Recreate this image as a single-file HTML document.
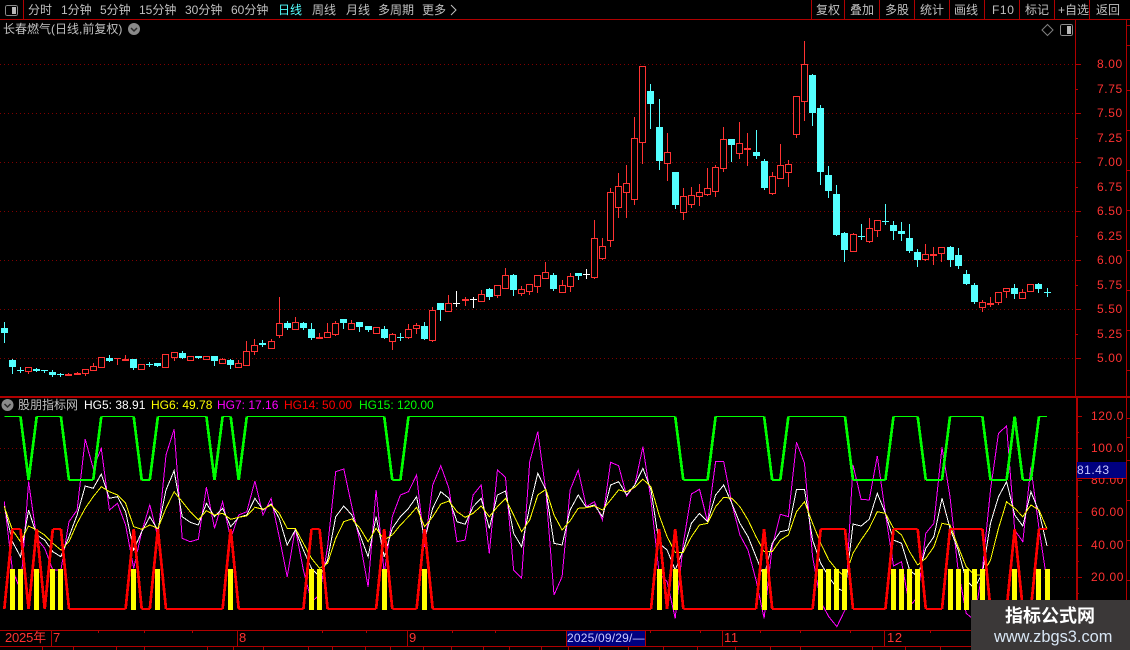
<!DOCTYPE html>
<html><head><meta charset="utf-8"><style>
html,body{margin:0;padding:0;background:#000;width:1130px;height:650px;overflow:hidden}
#r{position:relative;width:1130px;height:650px;overflow:hidden;background:#000;font:12px/14px "Liberation Sans","WenQuanYi Zen Hei","Noto Sans CJK SC",sans-serif;color:#c0c0c0}
#r span{position:absolute;white-space:nowrap}
#r svg{position:absolute;left:0;top:0}
.a{color:#ff3232;letter-spacing:.6px}
.t{color:#ff3232;font-size:13px}
</style></head><body><div id="r">
<svg id="s" width="1130" height="650" viewBox="0 0 1130 650" shape-rendering="crispEdges"></svg>

<span style="left:28px;top:3px">分时</span>
<span style="left:61px;top:3px">1分钟</span>
<span style="left:100px;top:3px">5分钟</span>
<span style="left:139px;top:3px">15分钟</span>
<span style="left:185px;top:3px">30分钟</span>
<span style="left:231px;top:3px">60分钟</span>
<span style="left:278px;top:3px;color:#54ffff">日线</span>
<span style="left:312px;top:3px">周线</span>
<span style="left:346px;top:3px">月线</span>
<span style="left:378px;top:3px">多周期</span>
<span style="left:422px;top:3px">更多</span>
<span style="left:816px;top:3px">复权</span>
<span style="left:850px;top:3px">叠加</span>
<span style="left:885px;top:3px">多股</span>
<span style="left:920px;top:3px">统计</span>
<span style="left:954px;top:3px">画线</span>
<span style="left:992px;top:3px;letter-spacing:.6px">F10</span>
<span style="left:1025px;top:3px">标记</span>
<span style="left:1058px;top:3px">+自选</span>
<span style="left:1096px;top:3px">返回</span>
<span style="left:3px;top:22px">长春燃气(日线,前复权)</span>

<span class="a" style="left:1097px;top:57px">8.00</span>
<span class="a" style="left:1097px;top:82px">7.75</span>
<span class="a" style="left:1097px;top:106px">7.50</span>
<span class="a" style="left:1097px;top:131px">7.25</span>
<span class="a" style="left:1097px;top:155px">7.00</span>
<span class="a" style="left:1097px;top:180px">6.75</span>
<span class="a" style="left:1097px;top:204px">6.50</span>
<span class="a" style="left:1097px;top:229px">6.25</span>
<span class="a" style="left:1097px;top:253px">6.00</span>
<span class="a" style="left:1097px;top:278px">5.75</span>
<span class="a" style="left:1097px;top:302px">5.50</span>
<span class="a" style="left:1097px;top:327px">5.25</span>
<span class="a" style="left:1097px;top:351px">5.00</span>

<span style="left:18px;top:398px">股朋指标网</span>
<span style="left:84px;top:398px;color:#fff">HG5: 38.91</span>
<span style="left:151px;top:398px;color:#ff0">HG6: 49.78</span>
<span style="left:217px;top:398px;color:#f0f">HG7: 17.16</span>
<span style="left:284px;top:398px;color:#f00">HG14: 50.00</span>
<span style="left:359px;top:398px;color:#0f0">HG15: 120.00</span>

<span class="a" style="left:1091px;top:409px">120.0</span>
<span class="a" style="left:1091px;top:441px">100.0</span>
<span class="a" style="left:1091px;top:473px">80.00</span>
<span class="a" style="left:1091px;top:505px">60.00</span>
<span class="a" style="left:1091px;top:538px">40.00</span>
<span class="a" style="left:1091px;top:570px">20.00</span>
<span style="left:1077px;top:462px;width:49px;height:16px;background:#000080;color:#c8c8ff;line-height:16px;letter-spacing:.5px">81.43</span>

<span class="t" style="left:5px;top:631px;letter-spacing:-.2px">2025年</span>
<span class="t" style="left:53px;top:631px">7</span>
<span class="t" style="left:239px;top:631px">8</span>
<span class="t" style="left:409px;top:631px">9</span>
<span style="left:567px;top:631px;width:78px;height:15px;background:#000080;color:#c8c8ff;line-height:15px;letter-spacing:.2px">2025/09/29/—</span>
<span class="t" style="left:724px;top:631px;letter-spacing:.6px">11</span>
<span class="t" style="left:887px;top:631px;letter-spacing:.6px">12</span>

<span style="left:971px;top:600px;width:159px;height:50px;background:#3b3838"></span>
<span style="left:1005px;top:605px;color:#fff;font:bold 18px/20px 'WenQuanYi Zen Hei','Noto Sans CJK SC',sans-serif">指标公式网</span>
<span style="left:994px;top:628px;color:#d8e6f4;font:16.4px/18px 'Liberation Sans',sans-serif">www.zbgs3.com</span>
</div>
<script>
var o=[];
function rect(x,y,w,h,c){o.push('<rect x="'+x+'" y="'+y+'" width="'+w+'" height="'+h+'" fill="'+c+'"/>')}
function line(x1,y1,x2,y2,c,extra){o.push('<line x1="'+x1+'" y1="'+y1+'" x2="'+x2+'" y2="'+y2+'" stroke="'+c+'" stroke-width="1" '+(extra||'')+'/>')}
var L='#b00000';
/* grid */
[64,113,162,211,260,309,358,448,480,512,545,577].forEach(function(y){line(0,y+.5,1075,y+.5,'#800000','stroke-dasharray="1 3"')});
/* frame */
rect(0,19,1130,1,L);rect(0,396,1130,2,L);rect(0,630,1130,1,L);rect(0,646,1130,1,L);
rect(23,0,1,19,L);
[811,844,879,914,949,984,1019,1054,1089].forEach(function(x){rect(x,0,1,19,L)});
rect(1075,20,1,376,L);rect(1076,398,2,232,L);rect(1126,20,1,610,L);
rect(1077,462,49,1,L);rect(1077,478,49,1,L);
for(var k=0;k<13;k++){var y=Math.round(64.3+24.5*k);rect(1076,y,k%2?2:5,1,L)}
[416,448,480,512,545,577].forEach(function(y){rect(1078,y,4,1,L)});
[432,496,528,561,593].forEach(function(y){rect(1078,y,1,1,L)});
[25,45,90,130,170,210,250,290,330,370,418,437,460,500,540,580,620].forEach(function(y){rect(1127,y,3,1,L)});
[51,237,407,722,884].forEach(function(x){rect(x,631,1,15,L)});
rect(566,631,1,15,L);rect(645,631,1,15,L);
[98,144,192,322,366,452,495,650,700,760,800,850,930].forEach(function(x){rect(x,631,1,2,L)});
[42,73,116,144,207,233,263,308,332,365,390,423,451,483,509,541,568,599,628,663,697,735,770,800,872,905,940].forEach(function(x){rect(x,647,1,3,L)});
/* candles */
var d="c322,328,333,343|c359,360,367,374|x367,370,370,373|r367,367,371,374|c368,369,371,372|c370,370,371,373|c370,372,375,377|c373,374,375,377|f373,374,376,376|f372,373,375,375|r369,369,373,376|r363,366,370,370|r357,357,367,367|c355,358,361,362|f358,358,359,365|f355,359,361,361|c359,359,368,370|r364,364,369,370|x362,364,365,367|c363,363,366,367|r354,354,367,367|r352,352,357,361|c351,353,358,359|r356,356,360,360|c356,356,358,359|r356,356,359,359|c356,356,361,366|r358,359,363,364|c359,360,365,369|r360,363,367,367|r341,351,365,366|r339,345,351,355|c340,343,345,347|r339,341,348,348|r297,323,335,338|c321,323,328,330|r317,322,329,329|c322,323,328,330|c323,329,338,340|f333,337,339,339|r323,332,337,337|r321,323,334,336|c319,319,323,329|r320,323,329,329|c322,322,327,332|c326,326,330,332|r327,327,333,333|c326,329,338,339|r333,334,341,350|x333,337,337,341|r324,329,337,339|r323,325,328,334|c322,326,339,340|r307,310,340,342|c303,303,310,321|r295,303,311,311|w291,303,303,307|f297,299,301,306|w297,299,299,308|r290,294,301,301|c288,289,297,300|r285,285,295,298|r268,275,288,288|c274,275,290,296|r286,289,293,296|r284,284,291,295|r275,275,286,293|r262,272,278,279|c273,275,289,291|r280,285,292,293|r273,276,286,292|c273,273,276,280|w269,274,274,279|r220,238,277,279|r238,246,258,260|r188,192,240,247|r173,186,207,218|r165,183,192,218|r117,138,199,205|r66,66,142,164|c84,91,104,129|c99,127,161,170|r133,152,163,181|c172,172,205,209|r188,196,212,220|r187,195,204,208|r184,192,196,206|r168,188,194,196|r165,167,191,197|r127,139,168,172|c139,139,145,162|r122,143,153,159|f133,148,150,166|c130,152,156,159|c159,161,188,190|r172,176,193,195|r144,165,178,178|r160,164,172,187|r96,96,134,138|r41,64,101,121|c74,75,113,126|c105,108,172,185|c166,175,191,198|c185,194,235,236|c232,233,250,262|r233,234,251,251|x224,236,236,240|r218,228,241,243|r220,220,230,237|x204,221,221,225|c221,225,231,240|c222,231,234,241|c224,238,251,253|c249,252,260,267|r244,254,259,261|f247,254,256,265|r247,247,253,262|c246,247,260,267|c248,255,266,269|c270,274,284,285|c283,285,302,304|r300,302,307,312|f297,303,305,307|r292,292,302,305|r288,288,291,298|c284,288,294,299|r289,292,298,298|r284,284,291,292|c283,284,289,293|x288,292,292,297".split('|');
var RED='#ff3232',CY='#54ffff';
d.forEach(function(s,i){
 var t=s[0],v=s.slice(1).split(',').map(Number),hi=v[0],top=v[1],bot=v[2],lo=v[3];
 var px=Math.floor(4.33+8.083*i);
 var c=(t=='c'||t=='x')?CY:(t=='w'?'#fff':RED);
 rect(px,hi,1,lo-hi,c);
 if(t=='x'||t=='w'){rect(px-3,top,7,1,c)}
 else if(t=='c'){rect(px-3,top,7,Math.max(1,bot-top),c)}
 else if(t=='f'){rect(px-3,top,7,Math.max(1,bot-top),c)}
 else{o.push('<rect x="'+(px-3+.5)+'" y="'+(top+.5)+'" width="6" height="'+Math.max(1,bot-top)+'" fill="#000" stroke="'+c+'" stroke-width="1"/>')}
});
/* lower panel */
var on=[1,2,4,6,7,16,19,28,38,39,47,52,81,83,94,101,102,103,104,110,111,112,113,117,118,119,120,121,125,128,129];
function X(i){return 4.33+8.083*i}
var M=[305,510,570,245,415,445,510,510,365,330,118,205,145,330,310,375,505,395,315,410,165,88,415,425,418,262,385,305,415,345,335,243,345,295,410,530,385,510,605,585,440,215,207,320,425,560,270,520,350,285,275,225,440,255,197,265,425,420,285,255,460,210,232,510,535,185,95,275,585,530,270,210,320,305,360,187,197,288,255,140,300,520,545,655,430,282,268,365,185,185,310,405,450,540,655,440,343,350,127,190,470,605,650,680,630,195,298,300,168,340,498,485,620,590,400,370,142,290,510,640,660,510,270,100,78,390,425,200,385,544];
var W=[318,425,470,330,405,420,455,470,410,345,258,265,222,295,290,335,450,395,350,390,270,212,350,367,375,310,350,325,380,352,345,295,330,312,355,435,390,450,505,530,480,350,318,345,405,470,350,470,385,350,325,290,420,325,275,295,365,373,320,295,385,285,273,400,440,320,220,270,430,435,330,285,322,315,350,255,245,285,255,205,270,430,450,510,450,370,340,365,285,255,310,370,410,470,530,430,395,390,268,268,420,490,530,565,575,372,378,358,280,340,420,430,510,530,445,410,295,385,450,540,565,520,370,290,245,345,378,275,335,438];
var Y=[320,390,425,378,390,405,430,450,425,370,325,290,260,275,285,310,380,388,375,385,325,275,305,335,360,332,345,340,358,352,348,322,328,315,340,385,385,430,475,505,490,415,365,357,385,425,385,420,405,375,350,322,380,350,312,303,335,352,340,318,350,320,295,345,395,360,285,268,345,390,362,325,323,318,330,300,270,275,262,238,260,345,410,457,457,410,375,370,320,292,295,320,360,410,455,455,420,405,335,305,370,430,480,510,530,460,420,385,335,340,385,405,455,495,475,440,370,375,440,500,525,525,480,385,305,325,350,315,330,387];
function pl(a,c,w){o.push('<polyline fill="none" stroke="'+c+'" stroke-width="'+w+'" points="'+a.map(function(p,i){return X(i).toFixed(1)+','+p.toFixed(1)}).join(' ')+'"/>')}
function Z(a){return a.map(function(v){return 400+v/3})}
/* thick stepped lines: flat runs use their own width, slopes are heavier */
function seg(a,c,topW,topY){
 for(var i=0;i<a.length-1;i++){
  var fl=a[i]==a[i+1],w=fl?(a[i]==topY?topW:2):2.7;
  o.push('<line x1="'+X(i).toFixed(1)+'" y1="'+a[i]+'" x2="'+X(i+1).toFixed(1)+'" y2="'+a[i+1]+'" stroke="'+c+'" stroke-width="'+w+'"/>');
 }
}
pl(Z(M),'#f0f',1);pl(Z(W),'#fff',1);pl(Z(Y),'#ff0',1);
var R=[],G=[];for(var i=0;i<130;i++){R.push(on.indexOf(i)>=0?529:609);G.push(416.5)}
[3,8,9,10,11,17,18,26,29,48,49,84,85,86,87,95,96,105,106,107,108,109,114,115,116,122,123,124,126,127].forEach(function(i){G[i]=480});
seg(R,'#f00',2,529);
on.forEach(function(i){rect(Math.floor(X(i))-2,569,5,41,'#ff0')});
seg(G,'#0f0',1,416.5);
/* icons */
var ic='';
function box(x,y,w,h){return '<rect x="'+(x+.5)+'" y="'+(y+.5)+'" width="'+w+'" height="'+h+'" rx="2" fill="none" stroke="#8c8c8c"/><rect x="'+(x+w/2+1)+'" y="'+(y+2)+'" width="'+(w/2-2)+'" height="'+(h-3)+'" fill="#b8b8b8"/>'}
ic+=box(5,5,12,10)+box(1060,24,12,11);
ic+='<path d="M1047.5 24.5 L1053 30 L1047.5 35.5 L1042 30 Z" fill="none" stroke="#808080" shape-rendering="auto"/>';
function chev(x,y){return '<circle cx="'+x+'" cy="'+y+'" r="6" fill="#8a8a8a" shape-rendering="auto"/><path d="M'+(x-3)+' '+(y-1)+' L'+x+' '+(y+2)+' L'+(x+3)+' '+(y-1)+'" fill="none" stroke="#2a2a2a" stroke-width="1.5" shape-rendering="auto"/>'}
ic+=chev(134,29)+chev(7.5,405);
ic+='<path d="M451 5 L456 10 L451 15" fill="none" stroke="#c0c0c0" shape-rendering="auto"/>';
document.getElementById('s').innerHTML=o.join('')+ic;
</script>
</body></html>
